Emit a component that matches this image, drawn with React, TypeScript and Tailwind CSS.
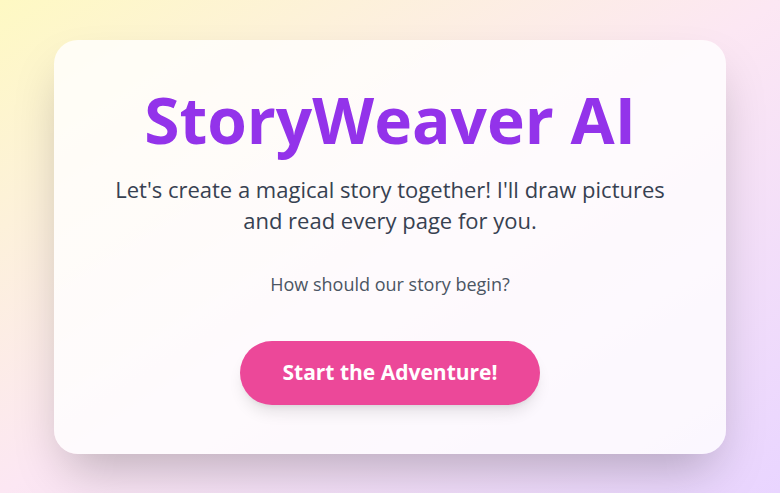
export default function App() {
  return (
    <div
      className="min-h-screen w-full flex items-center justify-center bg-gradient-to-br from-[#fef9c3] via-[#fce7f3] to-[#e9d5ff] p-4"
      style={{ fontFamily: '"Open Sans", Lato, sans-serif' }}
    >
      <div className="w-full max-w-[672px] rounded-3xl bg-white/80 shadow-2xl px-12 pt-12 pb-[49px] text-center">
        <h1 className="text-[64px] leading-[64px] font-bold text-[#9333ea]">
          StoryWeaver AI
        </h1>
        <p className="mt-[22px] mx-auto max-w-[565px] text-[22px] leading-[31px] text-[#374151]">
          Let's create a magical story together! I'll draw pictures and read every page for you.
        </p>
        <p className="mt-[34px] text-lg leading-7 text-[#4b5563]">How should our story begin?</p>
        <div className="mt-[43px] flex justify-center">
          <button className="w-[300px] h-16 rounded-full bg-[#ec4899] text-white text-[21px] font-bold shadow-lg">
            Start the Adventure!
          </button>
        </div>
      </div>
    </div>
  );
}
